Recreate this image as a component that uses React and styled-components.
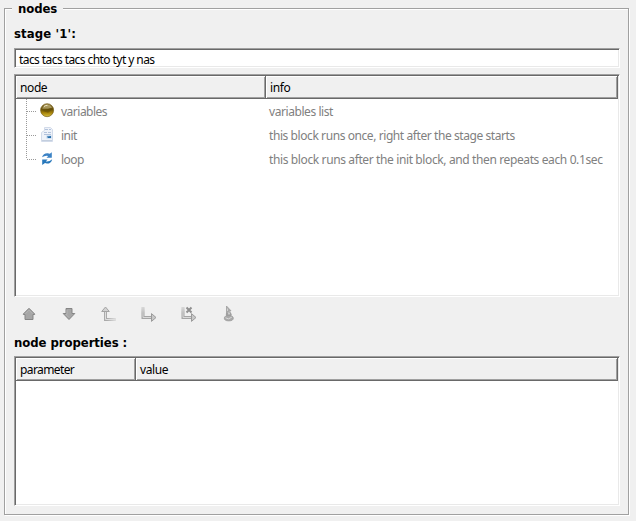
import React from 'react';
import styled, { createGlobalStyle } from 'styled-components';

const GlobalStyle = createGlobalStyle`
  * { box-sizing: border-box; }
  body { margin: 0; background: #f0f0f0; }
`;

const Page = styled.main`
  width: 636px;
  height: 521px;
  padding: 8px 7px 6px 4px;
  background: #f0f0f0;
  font-family: 'Noto Sans', sans-serif;
  font-size: 12px;
  color: #000;
`;

const Group = styled.section`
  display: flex;
  flex-direction: column;
  height: 507px;
  padding: 0 8px 0 9px;
  border: 1px solid #a0a0a0;
  box-shadow: 1px 1px 0 #fff, inset 1px 1px 0 #fff;
`;

const Text = styled.span`
  display: block;
  width: max-content;
  white-space: pre;
  letter-spacing: ${(p) => p.$spacing ?? -0.4}px;
`;

const Heading = styled.h2`
  width: max-content;
  height: ${(p) => p.$height}px;
  margin: 0;
  font: bold 13px/16px 'DejaVu Sans Condensed', 'DejaVu Sans', sans-serif;
  font-stretch: condensed;
  letter-spacing: ${(p) => p.$spacing || 0}px;
  white-space: pre;
`;

const Legend = styled(Heading)`
  margin: -8px 0 7px -2px;
  padding: 0 6px;
  background: #f0f0f0;
`;

const Sunken = styled.div`
  flex: none;
  width: 606px;
  height: ${(p) => p.$height}px;
  background: #fff;
  border: 1px solid;
  border-color: #a0a0a0 #fff #fff #a0a0a0;
  box-shadow: inset 1px 1px 0 #696969, inset -1px -1px 0 #e9e9e9;
`;

const Field = styled(Sunken)`
  margin-bottom: 6px;
  padding: 2px 4px;
  line-height: 17px;
`;

const Table = styled(Sunken)`
  padding: 1px;
`;

const HeaderRow = styled.div`
  display: grid;
  grid-template-columns: ${(p) => p.$first}px 1fr;
  height: 23px;
`;

const HeaderCell = styled.div`
  height: 23px;
  padding: 3px 4px 0;
  line-height: 18px;
  background: #f0f0f0;
  border: solid #696969;
  border-width: 0 1px 1px 0;
  box-shadow: inset 1px 1px 0 #fff, inset -1px -1px 0 #a0a0a0;
`;

const TreeRow = styled.div`
  display: grid;
  grid-template-columns: 24px 21px 208px 1fr;
  align-items: center;
  height: 24px;
  line-height: 16px;
  color: #808080;

  ${Text} {
    padding-top: 2px;
  }
`;

const Branch = styled.svg`
  display: block;
  width: 23px;
  height: 24px;
`;

const Icon = styled.svg`
  display: block;
  width: 16px;
  height: 16px;
`;

const Toolbar = styled.div`
  display: flex;
  gap: 24px;
  height: 38px;
  padding: 9px 0 0 7px;
`;

function BranchLine({ last }) {
  return (
    <Branch viewBox="0 0 23 24">
      <path d={last ? 'M10.5 0V12' : 'M10.5 0V24'} stroke="#999" strokeDasharray="1 1" />
      <path d="M11 12.5H21" stroke="#999" strokeDasharray="1 1" />
    </Branch>
  );
}

const OrbIcon = () => (
  <Icon viewBox="0 0 16 16">
    <defs>
      <linearGradient id="orb" x2="0" y2="1">
        <stop stopColor="#8a7432" />
        <stop offset=".42" stopColor="#66500a" />
        <stop offset=".7" stopColor="#a88408" />
        <stop offset="1" stopColor="#d6bf43" />
      </linearGradient>
    </defs>
    <circle cx="7.1" cy="7.2" r="6.5" fill="url(#orb)" stroke="#79601b" strokeWidth=".7" />
    <path d="M2.2 5.7Q3.4 1.6 7 1.4Q11 1.6 12 4.7L8 5.7Z" fill="#eee4b8" opacity=".42" />
    <path d="M2 7.8L10 5.5L13 6.1L8 9.7Z" fill="#5c4807" opacity=".5" />
    <path d="M4 3.6Q5.2 2.3 7.5 2.3" stroke="#fff7da" fill="none" opacity=".8" />
  </Icon>
);

const PageIcon = () => (
  <Icon viewBox="0 0 16 16">
    <path d="M4.5.5H10.5L12.5 2.5V14.5H1.5V5.5L4.5 3.5Z" fill="#eef2f9" stroke="#d2dbea" />
    <path d="M5 2.5H8M9 2.5H11M4 5.5H7M8 5.5H11M4 7.5H11" stroke="#b3c3dc" />
    <path d="M6.5 8.5H11.5V11.5H6.5Z" fill="#b7d1ea" />
    <path d="M7 9.5L11 9V11H8Z" fill="#286eaa" />
    <path d="M2 13.5H12" stroke="#c3cede" />
  </Icon>
);

const LoopIcon = () => (
  <Icon viewBox="0 0 16 16">
    <path d="M2 6.3Q3.4 2.1 7.7 2.3L9.8 2.8L11.8 1.3V6.8H6.5L8.2 5Q5.2 4.2 2 6.3Z" fill="#3b82c5" />
    <path d="M12.2 8.2Q11.2 12.7 6.9 12.6L5 11.9L2.2 14V8.6H7.6L5.8 10.4Q9 11.1 12.2 8.2Z" fill="#2878bb" />
  </Icon>
);

const ArrowIcon = ({ down }) => (
  <Icon viewBox="-.5 0 16 16">
    <path
      d={down ? 'M4.5 2.5H10.5V7.5H13.3L7.5 13.5L1.7 7.5H4.5Z' : 'M7.5 2.3L13.2 8V8.5H11.5V13.5H3.5V8.5H1.8V8Z'}
      fill="#a6a6a6"
      stroke="#858585"
      strokeLinejoin="round"
    />
    <path d={down ? 'M5.5 4V8.5H4.5L7.5 11.5' : 'M4 7.7L7.5 4.1L11 7.7'} fill="none" stroke="#b5b5b5" />
  </Icon>
);

const UpBranchIcon = () => (
  <Icon viewBox="0 0 16 16">
    <defs>
      <linearGradient id="tail" gradientUnits="userSpaceOnUse" x1="6" x2="16" y1="0" y2="0">
        <stop stopColor="#aaa" />
        <stop offset="1" stopColor="#aaa" stopOpacity=".15" />
      </linearGradient>
    </defs>
    <path d="M4.5 5V13.5H15" fill="none" stroke="url(#tail)" strokeWidth="3" />
    <path d="M3.5 5V14.5H6M5.5 5V12.5" fill="none" stroke="#aaa" />
    <path d="M4.5 5V13.5H15" fill="none" stroke="#dedede" />
    <path d="M.7 5.5L4.5 1L8.3 5.5Z" fill="#d2d2d2" stroke="#a4a4a4" />
  </Icon>
);

const RightBranch = ({ id }) => (
  <>
    <defs>
      <linearGradient id={id} gradientUnits="userSpaceOnUse" x1="0" x2="0" y1="0" y2="7">
        <stop stopColor="#a5a5a5" stopOpacity=".25" />
        <stop offset="1" stopColor="#a5a5a5" />
      </linearGradient>
    </defs>
    <path d="M2 1V11.5H11" fill="none" stroke={`url(#${id})`} strokeWidth="3" />
    <path d="M2 1V11.5H11" fill="none" stroke="#dadada" />
    <path d="M10.5 7.6L15 11.5L10.5 15.4Z" fill="#c8c8c8" stroke="#9b9b9b" />
  </>
);

const RightBranchIcon = () => (
  <Icon viewBox="0 0 16 16"><RightBranch id="branch" /></Icon>
);

const DeleteBranchIcon = () => (
  <Icon viewBox="0 0 16 16">
    <RightBranch id="deleteBranch" />
    <path d="M5.5 1.5L10.5 6.5M10.5 1.5L5.5 6.5" stroke="#8f8f8f" strokeWidth="2" />
  </Icon>
);

const FigureIcon = () => (
  <Icon viewBox="0 0 16 16">
    <path d="M5.5 0L10 4.8L7.5 5.7L5.5 7Z" fill="#aaa" stroke="#999" strokeWidth=".7" />
    <path d="M6.5 2.5V5" stroke="#d2d2d2" />
    <path d="M5 7L9.5 6L10.8 8.5L9.5 11H6L4.8 9Z" fill="#a0a0a0" />
    <ellipse cx="7.8" cy="12.2" rx="4.5" ry="2.7" fill="#aaa" stroke="#999" strokeWidth=".7" />
    <path d="M4.5 11.8L7.5 12.8L10.8 11.2" fill="none" stroke="#dadada" />
    <path d="M7 7.8H9" stroke="#ddd" />
  </Icon>
);

const rows = [
  { name: 'variables', info: 'variables list', icon: OrbIcon, infoSpacing: -0.43 },
  { name: 'init', info: 'this block runs once, right after the stage starts', icon: PageIcon, infoSpacing: -0.42 },
  { name: 'loop', info: 'this block runs after the init block, and then repeats each 0.1sec', icon: LoopIcon, infoSpacing: -0.38, last: true },
];

export default function App() {
  return (
    <Page>
      <GlobalStyle />
      <Group>
        <Legend $height={18} $spacing={-0.1}>nodes</Legend>
        <Heading $height={22} $spacing={0.12}>stage '1':</Heading>
        <Field $height={20}><Text $spacing={-0.57}>tacs tacs tacs chto tyt y nas</Text></Field>
        <Table $height={223}>
          <HeaderRow $first={250}>
            <HeaderCell><Text>node</Text></HeaderCell>
            <HeaderCell><Text>info</Text></HeaderCell>
          </HeaderRow>
          {rows.map(({ name, info, icon: RowIcon, infoSpacing, last }) => (
            <TreeRow key={name}>
              <BranchLine last={last} />
              <RowIcon />
              <Text $spacing={-0.5}>{name}</Text>
              <Text $spacing={infoSpacing}>{info}</Text>
            </TreeRow>
          ))}
        </Table>
        <Toolbar>
          <ArrowIcon />
          <ArrowIcon down />
          <UpBranchIcon />
          <RightBranchIcon />
          <DeleteBranchIcon />
          <FigureIcon />
        </Toolbar>
        <Heading $height={21} $spacing={-0.06}>node properties :</Heading>
        <Table $height={150}>
          <HeaderRow $first={120}>
            <HeaderCell><Text $spacing={-0.6}>parameter</Text></HeaderCell>
            <HeaderCell><Text>value</Text></HeaderCell>
          </HeaderRow>
        </Table>
      </Group>
    </Page>
  );
}
